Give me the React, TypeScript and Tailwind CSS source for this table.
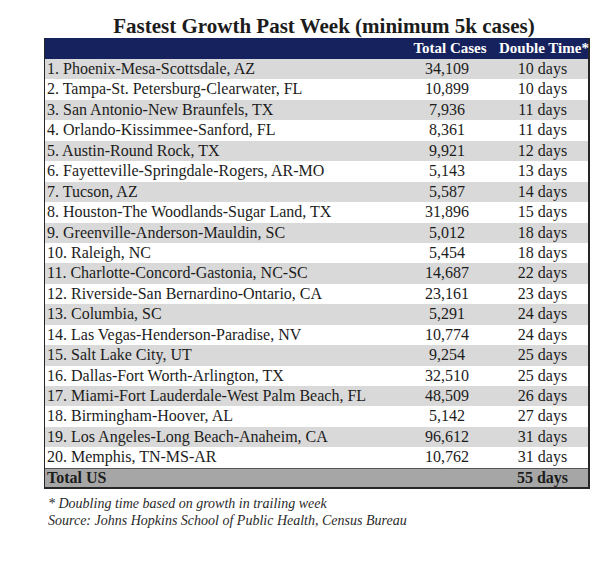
const rows = [
  ["1. Phoenix-Mesa-Scottsdale, AZ", "34,109", "10 days"],
  ["2. Tampa-St. Petersburg-Clearwater, FL", "10,899", "10 days"],
  ["3. San Antonio-New Braunfels, TX", "7,936", "11 days"],
  ["4. Orlando-Kissimmee-Sanford, FL", "8,361", "11 days"],
  ["5. Austin-Round Rock, TX", "9,921", "12 days"],
  ["6. Fayetteville-Springdale-Rogers, AR-MO", "5,143", "13 days"],
  ["7. Tucson, AZ", "5,587", "14 days"],
  ["8. Houston-The Woodlands-Sugar Land, TX", "31,896", "15 days"],
  ["9. Greenville-Anderson-Mauldin, SC", "5,012", "18 days"],
  ["10. Raleigh, NC", "5,454", "18 days"],
  ["11. Charlotte-Concord-Gastonia, NC-SC", "14,687", "22 days"],
  ["12. Riverside-San Bernardino-Ontario, CA", "23,161", "23 days"],
  ["13. Columbia, SC", "5,291", "24 days"],
  ["14. Las Vegas-Henderson-Paradise, NV", "10,774", "24 days"],
  ["15. Salt Lake City, UT", "9,254", "25 days"],
  ["16. Dallas-Fort Worth-Arlington, TX", "32,510", "25 days"],
  ["17. Miami-Fort Lauderdale-West Palm Beach, FL", "48,509", "26 days"],
  ["18. Birmingham-Hoover, AL", "5,142", "27 days"],
  ["19. Los Angeles-Long Beach-Anaheim, CA", "96,612", "31 days"],
  ["20. Memphis, TN-MS-AR", "10,762", "31 days"],
];

export default function App() {
  return (
    <div className="min-h-[561px] w-[612px] bg-white pl-[44px] pt-[16px] font-['Liberation_Serif',serif] text-[#1c1c1c]">
      <h1 className="h-[21px] w-[546px] pl-[14px] text-center text-[21px] font-bold leading-[20px] mb-[1px] whitespace-nowrap">
        Fastest Growth Past Week (minimum 5k cases)
      </h1>

      <div className="w-[546px] border-l border-r-2 border-b-2 border-[#262626]">
        <div className="flex h-[21px] items-center bg-[#16225d] text-[15px] font-bold leading-[21px] text-white">
          <div className="flex-1"></div>
          <div className="w-[88px] pl-[6px] text-center whitespace-nowrap">Total Cases</div>
          <div className="w-[97px] pl-[8px] text-center whitespace-nowrap">Double Time*</div>
        </div>

        {rows.map((r, i) => (
          <div
            key={r[0]}
            className={
              "flex h-[20.45px] text-[16px] leading-[20.45px] " +
              (i % 2 === 0 ? "bg-[#d9d9d9]" : "bg-white")
            }
          >
            <div className="flex-1 pl-[2px] whitespace-nowrap">{r[0]}</div>
            <div className="w-[88px] text-center">{r[1]}</div>
            <div className="w-[97px] pl-[6px] text-center">{r[2]}</div>
          </div>
        ))}

        <div className="flex h-[19px] border-t border-[#555] bg-[#a6a6a6] text-[16px] font-bold leading-[18px]">
          <div className="flex-1 pl-[2px]">Total US</div>
          <div className="w-[88px]"></div>
          <div className="w-[97px] pl-[6px] text-center">55 days</div>
        </div>
      </div>

      <div className="mt-[6px] pl-[4px] text-[14px] italic leading-[17px] text-[#2a2a2a]">
        <p>* Doubling time based on growth in trailing week</p>
        <p>Source: Johns Hopkins School of Public Health, Census Bureau</p>
      </div>
    </div>
  );
}
